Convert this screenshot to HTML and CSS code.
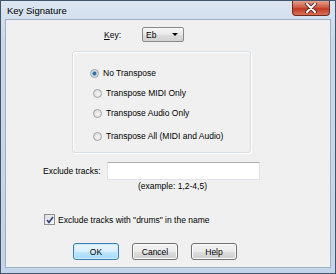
FILE: index.html
```html
<!DOCTYPE html>
<html lang="en">

<head>
    <meta charset="UTF-8">
    <title>Key Signature</title>
    <link rel="stylesheet" href="styles.css">
</head>

<body>
    <div class="window">
        <div class="titlebar">
            <span class="title">Key Signature</span>
            <div class="close-btn">
                <svg width="12" height="10" viewBox="0 0 12 10">
                    <path d="M2 1 L10 9 M10 1 L2 9" stroke="#4a1a14" stroke-width="3.6" stroke-linecap="round" />
                    <path d="M2 1 L10 9 M10 1 L2 9" stroke="#ffffff" stroke-width="2" stroke-linecap="round" />
                </svg>
            </div>
        </div>

        <div class="client">
            <div class="key-row">
                <label class="key-label"><u>K</u>ey:</label>
                <div class="combo">
                    <span>Eb</span>
                    <span class="arrow"></span>
                </div>
            </div>

            <div class="group">
                <div class="radio-item first">
                    <span class="radio checked"></span>
                    <span>No Transpose</span>
                </div>
                <div class="radio-item">
                    <span class="radio"></span>
                    <span>Transpose MIDI Only</span>
                </div>
                <div class="radio-item">
                    <span class="radio"></span>
                    <span>Transpose Audio Only</span>
                </div>
                <div class="radio-item last">
                    <span class="radio"></span>
                    <span>Transpose All (MIDI and Audio)</span>
                </div>
            </div>

            <div class="exclude-row">
                <label class="exclude-label">Exclude tracks:</label>
                <div class="textbox"></div>
            </div>
            <p class="example">(example: 1,2-4,5)</p>

            <div class="check-row">
                <span class="checkbox">
                    <svg width="8" height="8" viewBox="0 0 8 8">
                        <path d="M1 4 L3 6.5 L7 1" fill="none" stroke="#2a3f8a" stroke-width="1.6" />
                    </svg>
                </span>
                <span>Exclude tracks with "drums" in the name</span>
            </div>

            <div class="buttons">
                <button class="btn default">OK</button>
                <button class="btn">Cancel</button>
                <button class="btn">Help</button>
            </div>
        </div>
    </div>
</body>

</html>
```

FILE: styles.css
```css
* {
    box-sizing: border-box;
}

body {
    margin: 0;
    font-family: "Liberation Sans", Arial, sans-serif;
    font-size: 8.5px;
    color: #000;
    background: #ffffff;
}

.window {
    width: 336px;
    height: 274px;
    border: 1px solid #44546a;
    background: linear-gradient(to bottom, #dce6f2, #c9d8ea 40px, #c5d5e9);
    padding: 0 4px 5px 4px;
    display: flex;
    flex-direction: column;
}

.titlebar {
    height: 18px;
    display: flex;
    align-items: flex-start;
    justify-content: space-between;
}

.title {
    font-size: 9.5px;
    margin: 4px 0 0 2px;
    color: #000;
}

.close-btn {
    width: 38px;
    height: 15px;
    margin-right: 1px;
    border: 1px solid #6b2b22;
    border-top: none;
    border-radius: 0 0 4px 4px;
    background: linear-gradient(to bottom, #e3a38f, #cd5a42 45%, #c03a22 55%, #d9725a);
    display: flex;
    align-items: center;
    justify-content: center;
}

.client {
    flex: 1;
    border: 1px solid #9fb1c9;
    background: #f0f0f0;
}

.key-row {
    display: flex;
    align-items: center;
    height: 15px;
    margin-top: 7px;
    padding-left: 98px;
}

.key-label {
    width: 38px;
}

.combo {
    width: 42px;
    height: 15px;
    border: 1px solid #8a8a8a;
    border-radius: 2px;
    background: linear-gradient(to bottom, #f6f6f6, #e9e9e9 50%, #dcdcdc 51%, #d2d2d2);
    display: flex;
    align-items: center;
    justify-content: space-between;
    padding: 0 5px 0 3px;
}

.arrow {
    width: 0;
    height: 0;
    border-left: 3px solid transparent;
    border-right: 3px solid transparent;
    border-top: 3px solid #000;
}

.group {
    width: 179px;
    height: 102px;
    margin: 9px 0 0 66px;
    border: 1px solid #d5dfe5;
    border-radius: 3px;
    box-shadow: inset 1px 1px 0 #fff, 1px 1px 0 #fff;
    padding-top: 11px;
    padding-left: 18px;
}

.radio-item {
    display: flex;
    align-items: center;
    height: 20px;
    margin-left: 2px;
}

.radio-item.first {
    margin-left: -1px;
}

.radio-item.last {
    margin-top: 3px;
}

.radio {
    width: 9px;
    height: 9px;
    border-radius: 50%;
    border: 1px solid #a0a0a0;
    background: radial-gradient(circle at 60% 60%, #f4f4f4, #d8d8d8);
    margin-right: 4px;
    position: relative;
}

.radio.checked {
    background: radial-gradient(circle, #3e6c94 0, #3e6c94 30%, #9cc9ec 45%, #e8eef4 70%);
}

.exclude-row {
    display: flex;
    align-items: center;
    height: 18px;
    margin-top: 9px;
    padding-left: 37px;
}

.exclude-label {
    width: 64px;
}

.textbox {
    width: 153px;
    height: 18px;
    background: #fff;
    border: 1px solid #e2e3ea;
    border-top-color: #abadb3;
}

.example {
    margin: 1px 0 0 132px;
    height: 11px;
    line-height: 11px;
}

.check-row {
    display: flex;
    align-items: center;
    height: 11px;
    margin-top: 22px;
    padding-left: 38px;
}

.checkbox {
    width: 11px;
    height: 11px;
    border: 1px solid #8e8f8f;
    background: linear-gradient(to bottom right, #dcdcdc, #fbfbfb);
    margin-right: 3px;
    display: flex;
    align-items: center;
    justify-content: center;
}

.buttons {
    display: flex;
    gap: 13px;
    margin-top: 18px;
    padding-left: 67px;
}

.btn {
    width: 46px;
    height: 17px;
    padding: 0;
    font-family: inherit;
    font-size: 8.5px;
    color: #000;
    border: 1px solid #707070;
    border-radius: 3px;
    background: linear-gradient(to bottom, #f2f2f2, #ebebeb 50%, #dddddd 51%, #cfcfcf);
    box-shadow: inset 0 0 0 1px #fcfcfc;
}

.btn.default {
    border-color: #3c7fb1;
    background: linear-gradient(to bottom, #eaf6fd, #d9f0fc 50%, #bee6fd 51%, #a7d9f5);
    box-shadow: inset 0 0 0 1px #c7ecfc;
}
```
